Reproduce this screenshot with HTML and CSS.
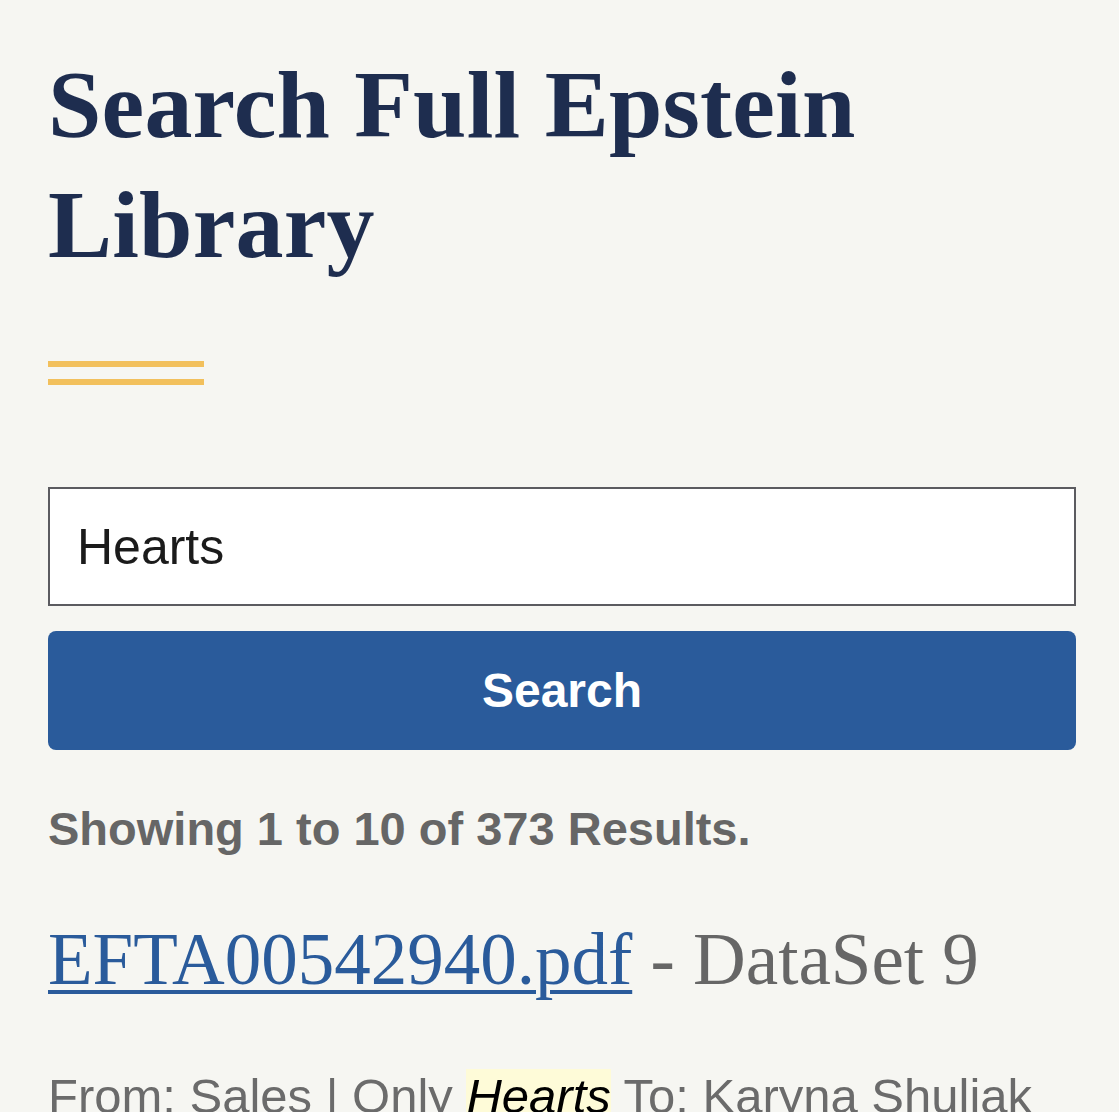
FILE: index.html
```html
<!DOCTYPE html>
<html lang="en">
<head>
<meta charset="utf-8">
<title>Search Full Epstein Library</title>
<link rel="stylesheet" href="styles.css">
</head>
<body>
<main class="page">
  <h1 class="title">Search Full Epstein Library</h1>
  <div class="rule"><span class="rule-bar"></span><span class="rule-bar"></span></div>
  <form class="search-form">
    <div class="search-input">Hearts</div>
    <button class="search-button" type="button">Search</button>
  </form>
  <p class="result-count">Showing 1 to 10 of 373 Results.</p>
  <h2 class="result-title"><a class="result-link" href="#">EFTA00542940.pdf</a> - DataSet 9</h2>
  <p class="result-snippet">From: Sales | Only <em class="hit">Hearts</em> To: Karyna Shuliak</p>
</main>
</body>
</html>
```
FILE: styles.css
```css
html, body {
  margin: 0;
  padding: 0;
  background: #f6f6f2;
  overflow: hidden;
}
.page {
  width: 1028px;
  margin-left: 48px;
  padding-top: 45px;
  display: flex;
  flex-direction: column;
}
.title {
  margin: 0;
  font-family: "Liberation Serif", "DejaVu Serif", serif;
  font-weight: 700;
  font-size: 96px;
  line-height: 120px;
  color: #1e2d4f;
  letter-spacing: 0.2px;
}
.rule {
  margin-top: 76px;
  display: flex;
  flex-direction: column;
  gap: 12px;
}
.rule-bar {
  display: block;
  width: 156px;
  height: 6px;
  background: #f2c05c;
}
.search-form {
  margin: 102px 0 0;
  display: flex;
  flex-direction: column;
  gap: 25px;
}
.search-input {
  box-sizing: border-box;
  height: 119px;
  border: 2px solid #5b5b60;
  background: #ffffff;
  padding: 0 27px;
  display: flex;
  align-items: center;
  font-family: "Liberation Sans", Arial, sans-serif;
  font-size: 50px;
  color: #1b1b1b;
}
.search-button {
  height: 119px;
  border: 0;
  border-radius: 8px;
  background: #2a5b9b;
  color: #ffffff;
  font-family: "Liberation Sans", Arial, sans-serif;
  font-weight: 700;
  font-size: 48px;
  padding: 0;
}
.result-count {
  margin: 51px 0 0;
  font-family: "Liberation Sans", Arial, sans-serif;
  font-weight: 700;
  font-size: 47px;
  line-height: 56px;
  color: #666666;
}
.result-title {
  margin: 59px 0 0;
  font-family: "Liberation Serif", "DejaVu Serif", serif;
  font-weight: 400;
  font-size: 73px;
  line-height: 88px;
  color: #666666;
  white-space: nowrap;
}
.result-link {
  color: #2a5b9b;
  text-decoration: underline;
  text-decoration-thickness: 4px;
  text-underline-offset: 6px;
}
.result-snippet {
  margin: 62px 0 0;
  font-family: "Liberation Sans", Arial, sans-serif;
  font-size: 49px;
  line-height: 60px;
  color: #6b6b6b;
  white-space: nowrap;
}
.hit {
  font-style: italic;
  color: #000000;
  background: #fefbd8;
}
```
